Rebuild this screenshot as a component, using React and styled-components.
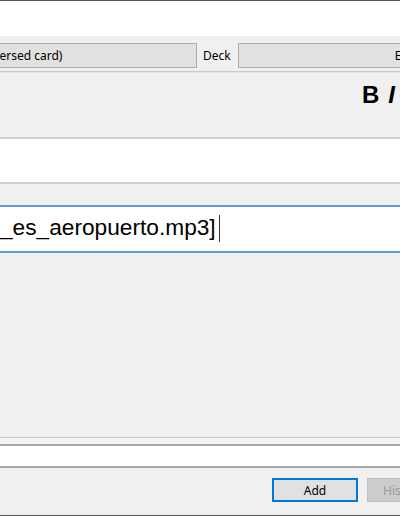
import React from 'react';
import styled, { createGlobalStyle } from 'styled-components';

const GlobalStyle = createGlobalStyle`
  html, body {
    margin: 0;
    padding: 0;
    background: #f0f0f0;
  }
  body {
    font-family: "Noto Sans", "Liberation Sans", Arial, sans-serif;
    font-size: 12px;
    color: #000;
  }
`;

const Window = styled.div`
  width: 400px;
  height: 516px;
  box-sizing: border-box;
  overflow: hidden;
  display: flex;
  flex-direction: column;
  background: #f0f0f0;
  border-top: 1px solid #555;
  border-bottom: 1px solid #555;
`;

const TitleSpace = styled.div`
  height: 35px;
  background: #fff;
  flex: none;
`;

const ChooserRow = styled.div`
  display: flex;
  align-items: center;
  height: 25px;
  margin: 7px 0 0 -213px;
  flex: none;
`;

const ChooserButton = styled.div`
  flex: none;
  width: ${p => p.$width}px;
  height: 25px;
  box-sizing: border-box;
  border: 1px solid #adadad;
  background: #e1e1e1;
  display: flex;
  align-items: center;
  justify-content: center;
  white-space: nowrap;
  font-size: 12px;
`;

const ChooserLabel = styled.span`
  flex: none;
  width: 35px;
  padding-left: 6px;
  font-size: 12px;
`;

const Divider = styled.div`
  flex: none;
  margin-top: 3px;
  height: 1px;
  background: #c8c8c8;
  border-bottom: 1px solid #e4e4e4;
`;

const Toolbar = styled.div`
  flex: none;
  height: 64px;
  display: flex;
  align-items: flex-start;
  gap: 9px;
  padding: 8px 0 0 362px;
  box-sizing: border-box;
  overflow: hidden;
  white-space: nowrap;
  font-family: "Liberation Sans", Arial, sans-serif;
  font-size: 24px;
  font-weight: bold;
`;

const FormatButton = styled.span`
  flex: none;
  font-style: ${p => (p.$italic ? 'italic' : 'normal')};
  text-decoration: ${p => (p.$underline ? 'underline' : 'none')};
  line-height: 28px;
`;

const Field = styled.div`
  flex: none;
  height: ${p => p.$height}px;
  box-sizing: border-box;
  padding-bottom: 4px;
  background: #fff;
  border-top: 2px solid ${p => (p.$focused ? '#5b9bd8' : '#d0d0d0')};
  border-bottom: 2px solid ${p => (p.$focused ? '#5b9bd8' : '#d0d0d0')};
  display: flex;
  align-items: center;
  font-family: "Liberation Sans", Arial, sans-serif;
  font-size: 22.7px;
  white-space: nowrap;
  overflow: hidden;
`;

const FieldLabel = styled.div`
  flex: none;
  height: 21px;
`;

const Caret = styled.span`
  display: inline-block;
  flex: none;
  width: 1px;
  height: 27px;
  background: #333;
  margin-left: 3px;
  margin-top: 3px;
`;

const Spacer = styled.div`
  flex: 1;
`;

const TagsArea = styled.div`
  flex: none;
  border-top: 1px solid #c8c8c8;
`;

const TagsGap = styled.div`
  height: 6px;
  background: #f4f4f4;
`;

const TagsField = styled.div`
  height: 24px;
  box-sizing: border-box;
  background: #fff;
  border-top: 2px solid #a8a8a8;
  border-bottom: 2px solid #a8a8a8;
`;

const ButtonBar = styled.div`
  flex: none;
  height: 47px;
  display: flex;
  align-items: flex-start;
  padding: 10px 0 0 272px;
  gap: 9px;
  box-sizing: border-box;
`;

const DialogButton = styled.div`
  flex: none;
  width: 86px;
  height: 24px;
  box-sizing: border-box;
  display: flex;
  align-items: center;
  justify-content: ${p => (p.$disabled ? 'flex-start' : 'center')};
  padding-left: ${p => (p.$disabled ? '15px' : '0')};
  font-size: 12px;
  background: ${p => (p.$disabled ? '#cccccc' : '#e1e1e1')};
  color: ${p => (p.$disabled ? '#9a9a9a' : '#000')};
  border: ${p => (p.$default ? '2px solid #0078d7' : '1px solid #bfbfbf')};
`;

export default function App() {
  return (
    <>
      <GlobalStyle />
      <Window>
        <TitleSpace />
        <ChooserRow>
          <ChooserButton $width={410}>Basic (and reversed card)</ChooserButton>
          <ChooserLabel>Deck</ChooserLabel>
          <ChooserButton $width={358}>Español</ChooserButton>
        </ChooserRow>
        <Divider />
        <Toolbar>
          <FormatButton>B</FormatButton>
          <FormatButton $italic>I</FormatButton>
          <FormatButton $underline>U</FormatButton>
        </Toolbar>
        <Field $height={47} />
        <FieldLabel />
        <Field $height={48} $focused>
          <span>_es_aeropuerto.mp3]</span>
          <Caret />
        </Field>
        <Spacer />
        <TagsArea>
          <TagsGap />
          <TagsField />
        </TagsArea>
        <ButtonBar>
          <DialogButton $default>Add</DialogButton>
          <DialogButton $disabled>History</DialogButton>
        </ButtonBar>
      </Window>
    </>
  );
}
